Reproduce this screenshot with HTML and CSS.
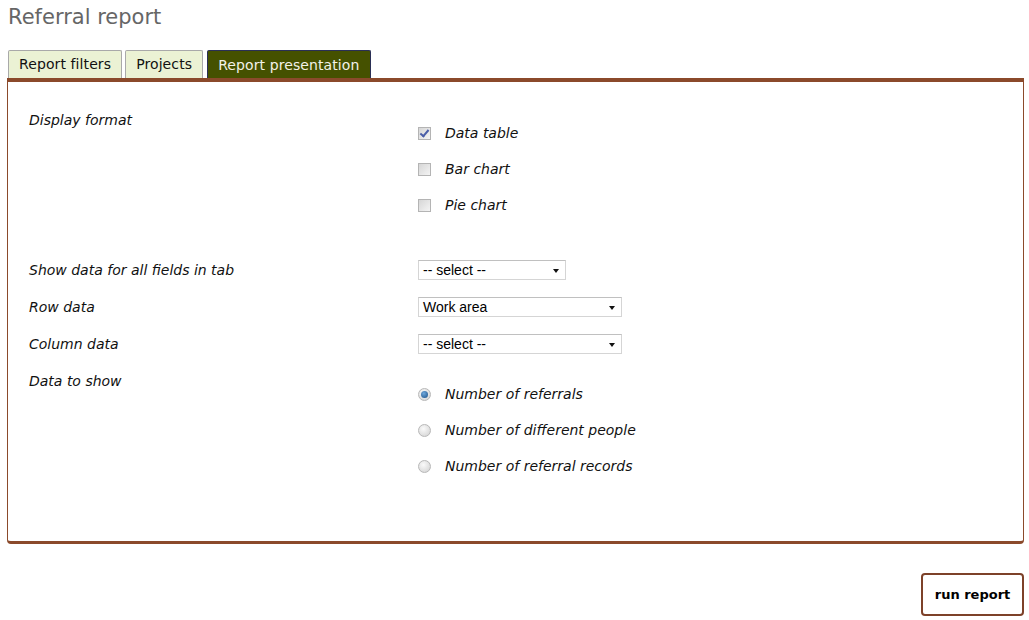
FILE: index.html
```html
<!DOCTYPE html>
<html>
<head>
<meta charset="utf-8">
<link rel="stylesheet" href="styles.css">
</head>
<body>
<h1 class="title">Referral report</h1>
<div class="tabs">
  <div class="tab">Report filters</div>
  <div class="tab">Projects</div>
  <div class="tab active">Report presentation</div>
</div>
<div class="panel">
  <div class="field">
    <div class="label">Display format</div>
    <div class="options">
      <label class="opt"><span class="check checked"></span><span class="opt-text">Data table</span></label>
      <label class="opt"><span class="check"></span><span class="opt-text">Bar chart</span></label>
      <label class="opt"><span class="check"></span><span class="opt-text">Pie chart</span></label>
    </div>
  </div>
  <div class="field sel-field first-sel">
    <div class="label">Show data for all fields in tab</div>
    <div class="select short"><span class="sel-text">-- select --</span><span class="arrow"></span></div>
  </div>
  <div class="field sel-field">
    <div class="label">Row data</div>
    <div class="select"><span class="sel-text">Work area</span><span class="arrow"></span></div>
  </div>
  <div class="field sel-field">
    <div class="label">Column data</div>
    <div class="select"><span class="sel-text">-- select --</span><span class="arrow"></span></div>
  </div>
  <div class="field">
    <div class="label">Data to show</div>
    <div class="options">
      <label class="opt"><span class="radio checked"></span><span class="opt-text">Number of referrals</span></label>
      <label class="opt"><span class="radio"></span><span class="opt-text">Number of different people</span></label>
      <label class="opt"><span class="radio"></span><span class="opt-text">Number of referral records</span></label>
    </div>
  </div>
</div>
<div class="actions">
  <button class="run">run report</button>
</div>
</body>
</html>
```
FILE: styles.css
```css
body {
  margin: 0;
  padding: 0 5px 0 7px;
  font-family: "DejaVu Sans", Verdana, sans-serif;
  background: #fff;
  color: #000;
}
.title {
  margin: 0;
  padding: 4px 0 0 1px;
  height: 45px;
  box-sizing: border-box;
  font-size: 21px;
  font-weight: normal;
  color: #666;
  line-height: 27px;
}
.tabs {
  display: flex;
  padding-left: 1px;
  gap: 3px;
  height: 33px;
  align-items: flex-end;
}
.tab {
  height: 28px;
  box-sizing: border-box;
  padding: 0 10px;
  font-size: 14px;
  letter-spacing: 0.1px;
  line-height: 26px;
  background: #ebf2d4;
  border: 1px solid #a9a9a9;
  border-bottom: none;
  border-radius: 2px 2px 0 0;
  color: #111;
}
.tab.active {
  margin-left: 1px;
  height: 28px;
  background: #455100;
  border-color: #2a2f55;
  color: #f2f2e8;
  line-height: 28px;
}
.panel {
  border: 1px solid #8b4a2b;
  border-top: 4px solid #8b4a2b;
  border-bottom: 3px solid #8b4a2b;
  border-radius: 0 0 4px 4px;
  padding: 28px 20px 57px 21px;
  height: 466px;
  box-sizing: border-box;
}
.field {
  display: flex;
  align-items: flex-start;
}
.label {
  width: 389px;
  flex: none;
  font-size: 14px;
  font-style: italic;
  line-height: 20px;
  color: #111;
}
.options {
  display: flex;
  flex-direction: column;
  padding-top: 5px;
}
.opt {
  display: flex;
  align-items: center;
  height: 36px;
}
.opt-text {
  font-size: 14px;
  font-style: italic;
  margin-left: 14px;
  color: #111;
}
.check, .radio {
  width: 13px;
  height: 13px;
  box-sizing: border-box;
  position: relative;
  flex: none;
}
.check {
  border: 1px solid #b4b4b4;
  background: linear-gradient(135deg, #d6d6d6, #f4f4f4);
}
.check.checked::after {
  content: "";
  position: absolute;
  left: 3px;
  top: 0px;
  width: 3px;
  height: 7px;
  border: solid #4a5ea8;
  border-width: 0 2px 2px 0;
  transform: rotate(40deg);
}
.radio {
  border-radius: 50%;
  border: 1px solid #b8b8b8;
  background: radial-gradient(circle at 40% 35%, #fafafa, #d0d0d0);
}
.radio.checked::after {
  content: "";
  position: absolute;
  left: 2px;
  top: 2px;
  width: 7px;
  height: 7px;
  border-radius: 50%;
  background: radial-gradient(circle at 40% 35%, #6fa8dc, #1a4f86);
}
.sel-field {
  margin-bottom: 17px;
  align-items: center;
}
.first-sel {
  margin-top: 37px;
}
.select {
  position: relative;
  width: 204px;
  height: 20px;
  box-sizing: border-box;
  border: 1px solid #d5d5d5;
  border-top-color: #c0c0c0;
  background: #fff;
  font-family: "Liberation Sans", Arial, sans-serif;
  font-size: 14px;
  line-height: 18px;
  padding-left: 4px;
  color: #000;
}
.select.short {
  width: 148px;
}
.arrow {
  position: absolute;
  right: 6px;
  top: 8px;
  width: 0;
  height: 0;
  border-left: 3px solid transparent;
  border-right: 3px solid transparent;
  border-top: 4px solid #111;
}
.actions {
  display: flex;
  justify-content: flex-end;
  padding-top: 29px;
}
.run {
  width: 103px;
  height: 43px;
  border: 2px solid #7d4129;
  border-radius: 4px;
  background: #fff;
  font-family: "DejaVu Sans", Verdana, sans-serif;
  font-weight: bold;
  font-size: 13px;
  color: #000;
  padding: 0;
}
```
